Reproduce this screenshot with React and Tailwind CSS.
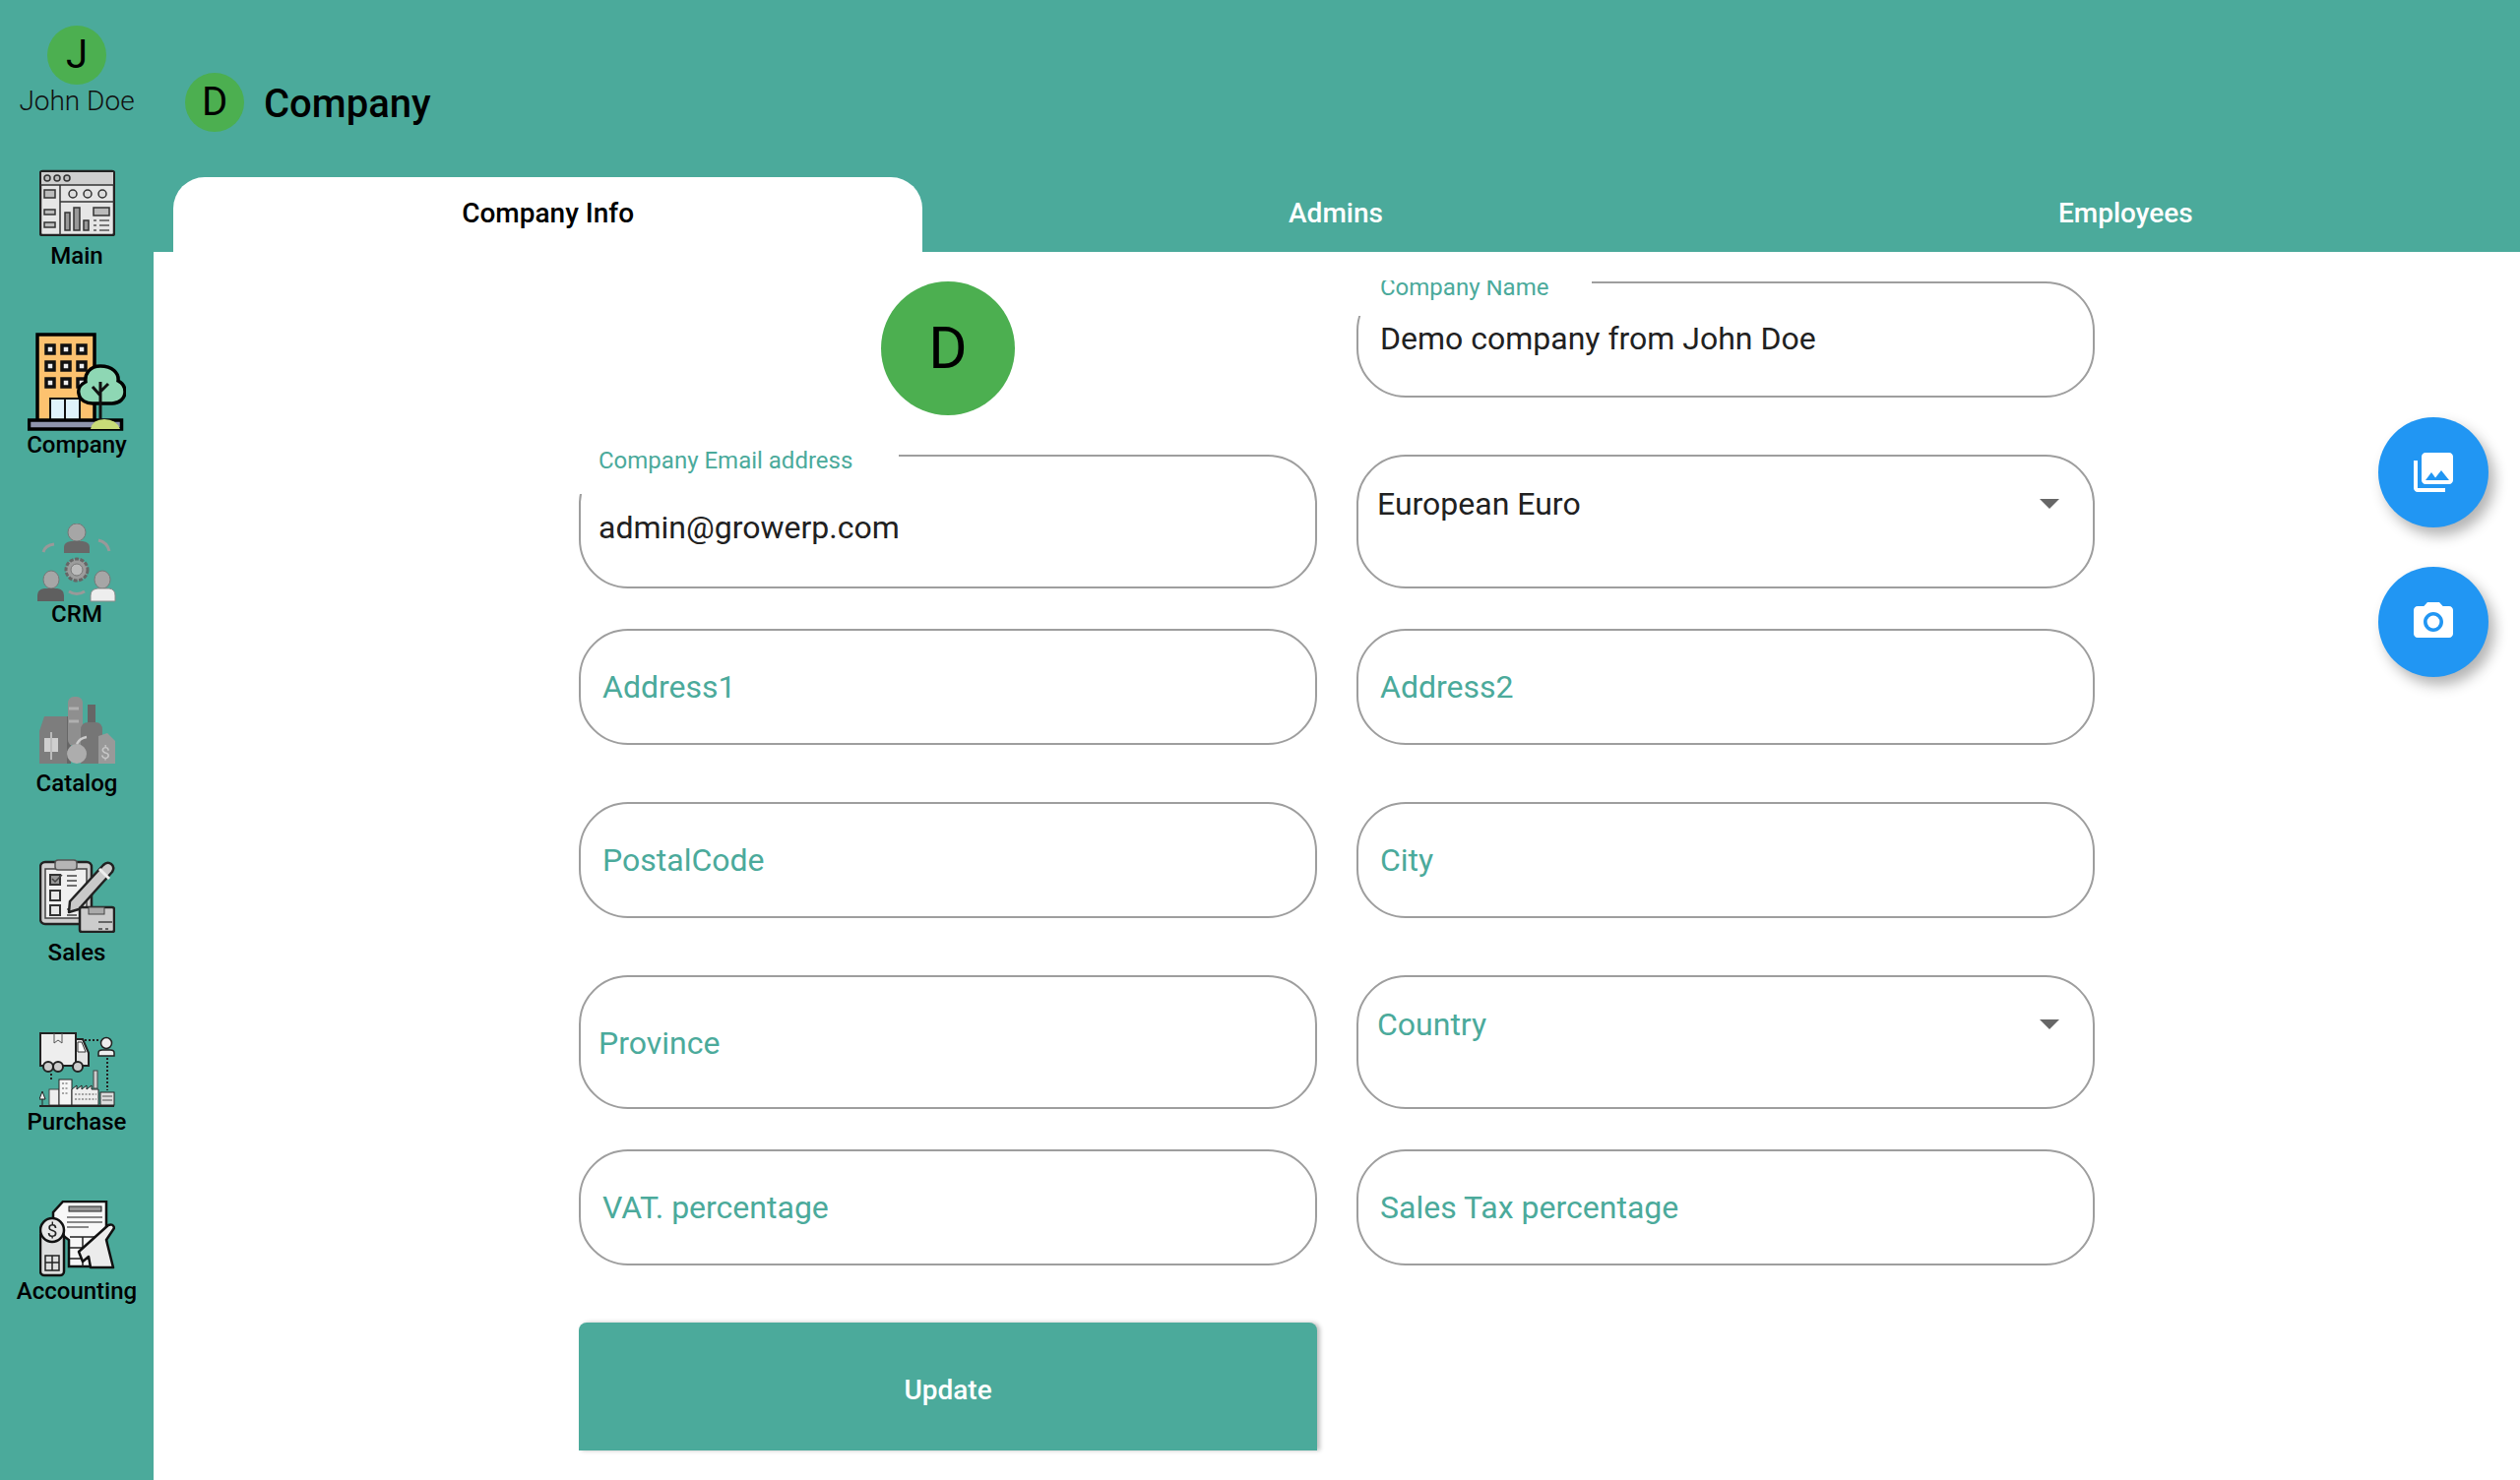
import { MdPhotoLibrary, MdPhotoCamera } from "react-icons/md";

const MainIcon = () => (
  <svg viewBox="40 172 77 68" className="w-[77px] h-[68px]">
    <rect x="41" y="174" width="75" height="65" rx="2" fill="#e6e6e6" stroke="#222" strokeWidth="2.5" />
    <rect x="42" y="175" width="73" height="13" fill="#cfcfcf" />
    <path d="M41 188H116M61 188V239M61 205H116" stroke="#333" strokeWidth="1.5" fill="none" />
    <g fill="#bbb" stroke="#333" strokeWidth="1.5">
      <circle cx="48" cy="181" r="3" />
      <circle cx="58" cy="181" r="3" />
      <circle cx="68" cy="181" r="3" />
      <circle cx="74" cy="197" r="4" fill="#ddd" />
      <circle cx="89" cy="197" r="4" fill="#ddd" />
      <circle cx="104" cy="197" r="4" fill="#ddd" />
      <rect x="45" y="193" width="11" height="8" />
      <rect x="45" y="213" width="11" height="5" />
      <rect x="45" y="226" width="11" height="5" />
      <rect x="66" y="216" width="5" height="18" fill="#999" />
      <rect x="75" y="211" width="6" height="23" fill="#999" />
      <rect x="85" y="224" width="5" height="10" fill="#999" />
      <rect x="95" y="211" width="16" height="8" />
    </g>
    <path d="M95 224H98M101 224H111M95 229H98M101 229H111M95 234H98M101 234H111" stroke="#555" strokeWidth="1.5" />
  </svg>
);

const CompanyIcon = () => (
  <svg viewBox="28 338 100 100" className="w-[100px] h-[100px]">
    <rect x="38" y="340" width="58" height="90" fill="#fdc26f" stroke="#000" strokeWidth="3.5" />
    <g fill="#eee" stroke="#111" strokeWidth="3.5">
      <rect x="47" y="351" width="8" height="8" />
      <rect x="63" y="351" width="8" height="8" />
      <rect x="79" y="351" width="8" height="8" />
      <rect x="47" y="368" width="8" height="8" />
      <rect x="63" y="368" width="8" height="8" />
      <rect x="79" y="368" width="8" height="8" />
      <rect x="47" y="385" width="8" height="8" />
      <rect x="63" y="385" width="8" height="8" />
      <rect x="79" y="385" width="8" height="8" />
    </g>
    <rect x="51" y="405" width="30" height="23" fill="#dff3fb" stroke="#111" strokeWidth="2" />
    <path d="M66 405V428" stroke="#111" strokeWidth="2" />
    <rect x="29.5" y="427" width="94" height="9" fill="#8f95ad" stroke="#000" strokeWidth="3.5" />
    <path d="M92 436q2-10 14-10t16 10z" fill="#c9dc78" />
    <path d="M102 372c-11 0-16 8-15 16-6 3-8 8-7 12 1 7 8 10 14 10h20c7 0 13-5 13-12 0-5-3-9-7-11 1-8-6-15-18-15z" fill="#8ed7b4" stroke="#000" strokeWidth="3.5" />
    <path d="M102 388V426M102 402L94 393M102 398L110 390" stroke="#111" strokeWidth="3" fill="none" />
  </svg>
);

const CrmIcon = () => (
  <svg viewBox="38 530 80 82" className="w-[80px] h-[82px]">
    <ellipse cx="78" cy="539" rx="9" ry="9" fill="#a6a6a6" stroke="#777" />
    <path d="M65 560v-6q0-5 7-6h12q7 1 7 6v6z" fill="#686868" />
    <circle cx="78" cy="577" r="11" fill="#9c9c9c" stroke="#666" strokeWidth="3" strokeDasharray="4 1.5" />
    <circle cx="78" cy="577" r="6" fill="#bbb" stroke="#777" />
    <ellipse cx="52" cy="587" rx="8" ry="9" fill="#a6a6a6" stroke="#777" />
    <path d="M38 609v-6q0-6 7-7h13q7 1 7 7v6z" fill="#5f5f5f" />
    <ellipse cx="104" cy="587" rx="8" ry="9" fill="#a6a6a6" stroke="#777" />
    <path d="M92 609v-6q0-6 7-7h12q6 1 6 7v6z" fill="#eeeeee" stroke="#888" />
    <g fill="none" stroke="#999" strokeWidth="3">
      <path d="M44 559q2-7 11-8" />
      <path d="M100 547q9 2 11 11" />
      <path d="M70 599q8 5 16 0" />
    </g>
  </svg>
);

const CatalogIcon = () => (
  <svg viewBox="40 708 77 68" className="w-[77px] h-[68px]">
    <path d="M40 743L45 728H72V776H40z" fill="#7d7d7d" />
    <path d="M70 728V776" stroke="#666" strokeWidth="4" />
    <path d="M45 750h14v14h-14z" fill="#cfcfcf" />
    <path d="M52 744V772" stroke="#bbb" strokeWidth="2" />
    <rect x="69" y="708" width="15" height="50" rx="6" fill="#8f8f8f" />
    <path d="M70 720H80M70 733H80" stroke="#b0b0b0" strokeWidth="3" />
    <rect x="89" y="716" width="8" height="20" fill="#666" />
    <path d="M82 742q0-8 8-8h7q7 0 7 8v34H82z" fill="#767676" />
    <path d="M100 748l9-3 8 8v23H100z" fill="#999" />
    <text x="107" y="771" fontSize="17" fill="#c8c8c8" textAnchor="middle" fontFamily="Roboto, sans-serif">$</text>
    <circle cx="78" cy="766" r="10" fill="#adadad" />
    <path d="M78 756q3-6 10-7" stroke="#ccc" strokeWidth="2.5" fill="none" />
  </svg>
);

const SalesIcon = () => (
  <svg viewBox="40 875 77 75" className="w-[77px] h-[75px]">
    <rect x="41" y="878" width="52" height="63" rx="5" fill="#cfcfcf" stroke="#222" strokeWidth="2.5" />
    <rect x="46" y="885" width="42" height="50" fill="#f0f0f0" stroke="#444" strokeWidth="1.5" />
    <rect x="56" y="876" width="22" height="10" rx="3" fill="#b5b5b5" stroke="#555" strokeWidth="1.5" />
    <g fill="#e8e8e8" stroke="#333" strokeWidth="2">
      <rect x="51" y="891" width="10" height="10" fill="#999" />
      <rect x="51" y="907" width="10" height="10" />
      <rect x="51" y="922" width="10" height="10" />
    </g>
    <path d="M53 895l3 3 7-7M68 892H78M68 897H78M68 902H78M68 926H78M68 932H78" stroke="#444" strokeWidth="1.5" fill="none" />
    <path d="M71 918L105 881q4-4 8-1t1 8L80 926l-10 3z" fill="#c9c9c9" stroke="#222" strokeWidth="2.5" strokeLinejoin="round" />
    <path d="M101 885L111 895" stroke="#eee" strokeWidth="3" />
    <rect x="81" y="924" width="35" height="25" rx="2" fill="#cccccc" stroke="#222" strokeWidth="2.5" />
    <rect x="90" y="924" width="16" height="7" fill="#aaa" stroke="#444" />
    <path d="M100 939H114M100 946H104M107 946H110" stroke="#444" strokeWidth="1.5" />
  </svg>
);

const PurchaseIcon = () => (
  <svg viewBox="40 1048 77 77" className="w-[77px] h-[77px]">
    <rect x="41" y="1049" width="36" height="33" fill="#eeeeee" stroke="#222" strokeWidth="2" />
    <path d="M77 1055H84L90 1069V1082H77z" fill="#e4e4e4" stroke="#222" strokeWidth="2" />
    <path d="M79 1058H83L87 1068H79z" fill="#fff" stroke="#333" />
    <path d="M55 1049V1059L59 1056L63 1059V1049" stroke="#555" fill="none" />
    <g fill="#ccc" stroke="#222" strokeWidth="2">
      <circle cx="49" cy="1083" r="5" />
      <circle cx="59" cy="1083" r="5" />
      <circle cx="79" cy="1083" r="5" />
    </g>
    <path d="M86 1056H100M109 1074V1107M52 1090V1098" stroke="#222" strokeWidth="2" strokeDasharray="2 2" fill="none" />
    <circle cx="108" cy="1059" r="5.5" fill="#eee" stroke="#222" strokeWidth="1.5" />
    <path d="M100 1072v-3q0-3 4-3h8q4 0 4 3v3z" fill="#eee" stroke="#222" strokeWidth="1.5" />
    <rect x="50" y="1106" width="10" height="16" fill="#eee" stroke="#444" />
    <rect x="60" y="1096" width="13" height="26" fill="#f5f5f5" stroke="#222" />
    <path d="M73 1122V1106l5-4v4l5-4v4l5-4v4l5-4v4l7 0V1122z" fill="#eee" stroke="#222" />
    <rect x="95" y="1087" width="4" height="18" fill="#ccc" stroke="#444" />
    <path d="M63 1100H70M63 1105H70M63 1110H70M76 1111H98M76 1116H98" stroke="#555" strokeDasharray="2 1.5" />
    <rect x="102" y="1109" width="14" height="13" fill="#ddd" stroke="#222" />
    <path d="M104 1113H114M104 1117H114" stroke="#555" />
    <path d="M43 1108l-3 8h6zM43 1116V1122" fill="#eee" stroke="#222" />
    <path d="M40 1123H116" stroke="#222" strokeWidth="2" />
  </svg>
);

const AccountingIcon = () => (
  <svg viewBox="40 1220 77 78" className="w-[77px] h-[78px]">
    <path d="M64 1221H108V1287H70V1260L54 1248V1232z" fill="#f7f7f7" stroke="#111" strokeWidth="2.5" />
    <rect x="70" y="1226" width="33" height="5" fill="#999" stroke="#222" />
    <path d="M68 1237H104M68 1242H104M68 1247H90" stroke="#888" strokeWidth="2" />
    <path d="M71 1257H96M71 1268H96M71 1279H96M84 1257V1287" stroke="#222" strokeWidth="1.5" />
    <rect x="41" y="1252" width="24" height="44" rx="4" fill="#dedede" stroke="#111" strokeWidth="2.5" />
    <circle cx="53" cy="1250" r="12" fill="#e8e8e8" stroke="#111" strokeWidth="2.5" />
    <text x="53" y="1257" fontSize="19" fill="#222" textAnchor="middle" fontFamily="Roboto, sans-serif">$</text>
    <path d="M46 1276H60V1291H46zM53 1276V1291M46 1283H60" stroke="#222" fill="none" strokeWidth="1.5" />
    <path d="M80 1272L110 1245q5-2 6 3l-8 12 7 28H92L90 1277l-6 5z" fill="#ececec" stroke="#111" strokeWidth="2.5" strokeLinejoin="round" />
  </svg>
);

const navItems = [
  { label: "Main", icon: <MainIcon />, slot: "h-[156px]", gap: "mt-[4px]" },
  { label: "Company", icon: <CompanyIcon />, slot: "h-[192px]", gap: "-mt-[2px]" },
  { label: "CRM", icon: <CrmIcon />, slot: "h-[172px]", gap: "-mt-[6px]" },
  { label: "Catalog", icon: <CatalogIcon />, slot: "h-[172px]", gap: "mt-[4px]" },
  { label: "Sales", icon: <SalesIcon />, slot: "h-[172px]", gap: "mt-[4px]" },
  { label: "Purchase", icon: <PurchaseIcon />, slot: "h-[172px]", gap: "-mt-[2px]" },
  { label: "Accounting", icon: <AccountingIcon />, slot: "h-[172px]", gap: "-mt-[2px]" },
];

const Avatar = ({ letter }) => (
  <div className="w-[60px] h-[60px] shrink-0 rounded-full bg-[#4caf50] flex items-center justify-center text-[40px] leading-none text-black">
    {letter}
  </div>
);

const Arrow = () => (
  <div className="w-0 h-0 mr-[34px] border-x-[10px] border-x-transparent border-t-[10px] border-t-[#666666]" />
);

const Field = ({ value, placeholder, select, className = "h-[118px]", textClass = "pl-[22px]", notch }) => (
  <div className={`relative w-[750px] rounded-[50px] border-2 border-[#9e9e9e] flex items-center justify-between ${className}`}>
    {notch}
    {value && <span className={`relative text-[32px] text-[#212121] ${textClass}`}>{value}</span>}
    {placeholder && <span className={`text-[32px] text-[#4baa9b] ${textClass}`}>{placeholder}</span>}
    {select && <Arrow />}
  </div>
);

const Notch = ({ label, className, textClass }) => (
  <div className={`absolute -left-[2px] -top-[3px] bg-white ${className}`}>
    <span className={`absolute whitespace-nowrap text-[24px] leading-none text-[#4baa9b] ${textClass}`}>{label}</span>
  </div>
);

export default function App() {
  return (
    <div className="flex w-[2560px] h-[1504px] overflow-hidden bg-[#4baa9b] font-['Roboto',sans-serif]">
      {/* Sidebar */}
      <aside className="w-[156px] shrink-0 flex flex-col items-center">
        <div className="h-[120px] pt-[26px] flex flex-col items-center">
          <Avatar letter="J" />
          <span className="text-[28px] font-light leading-[34px] text-[#111]">John Doe</span>
        </div>
        {navItems.map((item) => (
          <div key={item.label} className={`${item.slot} w-full flex flex-col items-center justify-end`}>
            <div className="blur-[0.4px]">{item.icon}</div>
            <span className={`text-[24px] font-medium leading-[32px] text-black whitespace-nowrap ${item.gap}`}>{item.label}</span>
          </div>
        ))}
      </aside>

      <main className="flex-1 flex flex-col">
        {/* Header */}
        <header className="h-[180px] shrink-0 pl-[32px] pt-[74px] flex items-start gap-[20px]">
          <Avatar letter="D" />
          <h1 className="text-[40px] font-medium leading-[64px] text-black">Company</h1>
        </header>

        {/* Tabs */}
        <nav className="h-[76px] shrink-0 grid grid-cols-3">
          <div className="px-[20px]">
            <div className="h-full bg-white rounded-t-[32px] flex items-center justify-center text-[28px] font-medium text-black pb-[2px]">
              Company Info
            </div>
          </div>
          <div className="flex items-center justify-center text-[28px] font-medium text-white pb-[2px] pr-[2px]">Admins</div>
          <div className="flex items-center justify-center text-[28px] font-medium text-white pb-[2px]">Employees</div>
        </nav>

        {/* Form */}
        <section className="relative flex-1 bg-white pl-[432px] pt-[30px]">
          <div className="flex gap-[40px] items-start">
            <div className="w-[750px] h-[136px] flex justify-center">
              <div className="w-[136px] h-[136px] rounded-full bg-[#4caf50] flex items-center justify-center text-[60px] leading-none text-black">
                D
              </div>
            </div>
            <Field
              className="h-[118px] pb-[3px]"
              value="Demo company from John Doe"
              notch={
                <Notch
                  label="Company Name"
                  className="w-[239px] h-[36px] overflow-hidden"
                  textClass="left-[24px] -top-[5px]"
                />
              }
            />
          </div>

          <div className="flex gap-[40px] mt-[40px]">
            <Field
              className="h-[136px] pt-[12px]"
              textClass="pl-[18px]"
              value="admin@growerp.com"
              notch={<Notch label="Company Email address" className="w-[325px] h-[41px]" textClass="left-[20px] -top-[5px]" />}
            />
            <Field className="h-[136px] pb-[36px]" textClass="pl-[19px]" value="European Euro" select />
          </div>

          <div className="flex gap-[40px] mt-[41px]">
            <Field placeholder="Address1" />
            <Field placeholder="Address2" />
          </div>

          <div className="flex gap-[40px] mt-[58px]">
            <Field placeholder="PostalCode" />
            <Field placeholder="City" />
          </div>

          <div className="flex gap-[40px] mt-[58px]">
            <Field className="h-[136px] pt-[2px]" textClass="pl-[18px]" placeholder="Province" />
            <Field className="h-[136px] pb-[36px]" textClass="pl-[19px]" placeholder="Country" select />
          </div>

          <div className="flex gap-[40px] mt-[41px]">
            <Field placeholder="VAT. percentage" />
            <Field placeholder="Sales Tax percentage" />
          </div>

          <button className="block mt-[58px] w-[750px] h-[130px] bg-[#4baa9b] rounded-t-[8px] text-[28px] font-medium text-white shadow-[3px_0px_4px_rgba(0,0,0,0.25)] pt-[7px]">
            Update
          </button>

          {/* Image buttons */}
          <div className="absolute right-[32px] top-[168px] flex flex-col gap-[40px]">
            <button className="w-[112px] h-[112px] rounded-full bg-[#2196f3] flex items-center justify-center text-white shadow-[6px_8px_14px_rgba(0,0,0,0.3)]">
              <MdPhotoLibrary size={48} />
            </button>
            <button className="w-[112px] h-[112px] rounded-full bg-[#2196f3] flex items-center justify-center text-white shadow-[6px_8px_14px_rgba(0,0,0,0.3)]">
              <MdPhotoCamera size={48} />
            </button>
          </div>
        </section>
      </main>
    </div>
  );
}
